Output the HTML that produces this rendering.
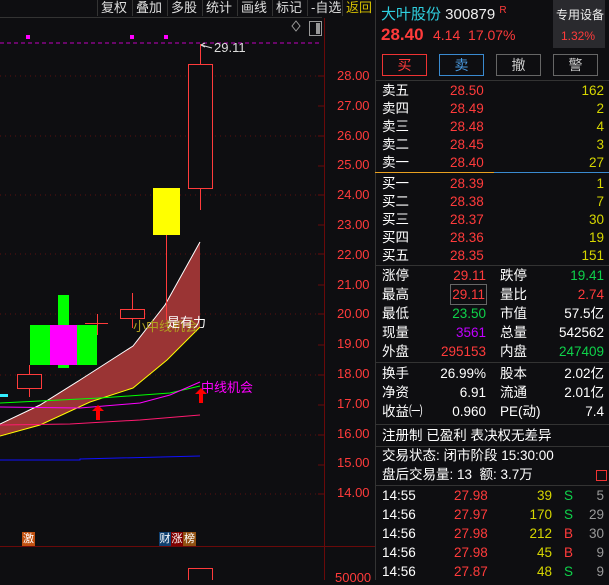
<!DOCTYPE html>
<html><head><meta charset="utf-8"><style>
*{margin:0;padding:0;box-sizing:border-box}
body{width:609px;height:580px;background:#0e0e11;overflow:hidden;position:relative;font-family:"Liberation Sans","Noto Sans CJK SC",sans-serif;color:#fff;font-size:13px}
.a{position:absolute;white-space:nowrap}
.r{color:#ff3b3b}.g{color:#0ed24a}.y{color:#d6d600}.w{color:#e8e8e8}.m{color:#c000ff}.gr{color:#999}
.tb{position:absolute;top:0;height:16px;border-left:1px solid #333;font-size:13px;line-height:15px;padding-left:3px;color:#ddd}
.row{position:absolute;left:382px;width:222px;height:19px;font-size:13.5px;line-height:19px}
.row span{position:absolute}
.btn{position:absolute;top:54px;width:45px;height:22px;border:1px solid #666;text-align:center;line-height:20px;font-size:14px}
.hl{position:absolute;left:375px;width:234px;height:1px;background:#333}
.bd{position:absolute;top:532px;height:14px;font-size:11px;line-height:14px;text-align:center;color:#fff}
</style></head><body>
<div class="a" style="left:0;top:17px;width:322px;height:1px;background:#333"></div>
<div class="tb" style="left:97px">复权</div>
<div class="tb" style="left:132px">叠加</div>
<div class="tb" style="left:167px">多股</div>
<div class="tb" style="left:202px">统计</div>
<div class="tb" style="left:237px">画线</div>
<div class="tb" style="left:272px">标记</div>
<div class="tb" style="left:307px">-自选</div>
<div class="tb" style="left:342px;color:#d6c000">返回</div>

<svg class="a" style="left:0;top:0" width="375" height="580">
<g stroke="#5a1010" stroke-dasharray="1,4">
<line x1="0" y1="76" x2="322" y2="76"/><line x1="0" y1="136" x2="322" y2="136"/><line x1="0" y1="195" x2="322" y2="195"/><line x1="0" y1="254" x2="322" y2="254"/><line x1="0" y1="314" x2="322" y2="314"/><line x1="0" y1="375" x2="322" y2="375"/><line x1="0" y1="435" x2="322" y2="435"/><line x1="0" y1="494" x2="322" y2="494"/>
</g>
<line x1="0" y1="43" x2="322" y2="43" stroke="#c000c0" stroke-dasharray="4,3"/>
<rect x="26" y="35" width="4" height="4" fill="#f0f"/><rect x="130" y="35" width="4" height="4" fill="#f0f"/><rect x="164" y="35" width="4" height="4" fill="#f0f"/>
<line x1="324.5" y1="18" x2="324.5" y2="580" stroke="#6a0a0a"/>
<line x1="0" y1="546.5" x2="375" y2="546.5" stroke="#6a0a0a"/>
<g stroke="#6a0a0a"><line x1="318" y1="76" x2="324" y2="76"/><line x1="318" y1="106" x2="324" y2="106"/><line x1="318" y1="136" x2="324" y2="136"/><line x1="318" y1="166" x2="324" y2="166"/><line x1="318" y1="195" x2="324" y2="195"/><line x1="318" y1="225" x2="324" y2="225"/><line x1="318" y1="254" x2="324" y2="254"/><line x1="318" y1="285" x2="324" y2="285"/><line x1="318" y1="314" x2="324" y2="314"/><line x1="318" y1="345" x2="324" y2="345"/><line x1="318" y1="375" x2="324" y2="375"/><line x1="318" y1="405" x2="324" y2="405"/><line x1="318" y1="435" x2="324" y2="435"/><line x1="318" y1="465" x2="324" y2="465"/><line x1="318" y1="494" x2="324" y2="494"/></g>
<path d="M296 21 L300 26 L296 31 L292 26 Z" fill="none" stroke="#999"/>
<rect x="309.5" y="21.5" width="12" height="14" fill="none" stroke="#999"/><rect x="316" y="23" width="4" height="11" fill="#999"/>
<path d="M0 424 L40 405 L80 380 L133 346 L165 305 L200 242 L200 327 L167 360 L133 388 L90 402 L40 425 L0 436 Z" fill="#9a3434"/>
<path d="M0 424 L40 405 L80 380 L133 346 L165 305 L200 242" fill="none" stroke="#fff"/>
<path d="M0 436 L40 425 L90 402 L133 388 L167 360 L200 327" fill="none" stroke="#ff0"/>
<path d="M0 403 L100 398 L170 393 L200 386" fill="none" stroke="#0f0"/>
<path d="M0 407 L80 408 L140 403 L170 395 L200 382" fill="none" stroke="#f0f"/>
<path d="M0 425 L70 424 L140 420 L200 415" fill="none" stroke="#ff1a70"/>
<path d="M0 460 L80 460 L80 459 L200 456" fill="none" stroke="#1010ff"/>
<rect x="0" y="394" width="8" height="3" fill="#3ef"/>
<line x1="29.5" y1="365" x2="29.5" y2="397" stroke="#ff3b3b"/><rect x="17.5" y="374.5" width="24" height="14" fill="#0e0e11" stroke="#ff3b3b"/>
<rect x="58" y="295" width="11" height="73" fill="#0f0"/>
<rect x="30" y="325" width="67" height="40" fill="#0f0"/><rect x="50" y="325" width="27" height="40" fill="#f0f"/>
<line x1="85" y1="323.5" x2="108" y2="323.5" stroke="#ff3b3b"/><line x1="97.5" y1="314" x2="97.5" y2="335" stroke="#ff3b3b"/>
<line x1="132.5" y1="293" x2="132.5" y2="328" stroke="#ff3b3b"/><rect x="120.5" y="309.5" width="24" height="9" fill="#0e0e11" stroke="#ff3b3b"/>
<line x1="166.5" y1="235" x2="166.5" y2="320" stroke="#ff3b3b"/><rect x="153" y="188" width="27" height="47" fill="#ff0"/>
<line x1="200.5" y1="44" x2="200.5" y2="210" stroke="#ff3b3b"/><rect x="188.5" y="64.5" width="24" height="124" fill="#0e0e11" stroke="#ff3b3b"/>
<rect x="188.5" y="568.5" width="24" height="20" fill="none" stroke="#ff3b3b"/>
<path d="M98 405 L104 411 L100 411 L100 420 L96 420 L96 411 L92 411 Z" fill="#f00"/>
<path d="M201 388 L207 394 L203 394 L203 403 L199 403 L199 394 L195 394 Z" fill="#f00"/>
<path d="M201 45 L205 43 M201 45 L205 47 M201 45 L212 48" stroke="#ddd" fill="none"/>
</svg>
<div class="a" style="left:214px;top:40px;font-size:13px;color:#ddd">29.11</div>
<div class="a" style="left:133px;top:316px;font-size:13px;color:#b0a020">小中线机会</div>
<div class="a" style="left:167px;top:312px;font-size:13px;color:#fff">是有力</div>
<div class="a" style="left:201px;top:377px;font-size:13px;color:#f0f">中线机会</div>
<div class="bd" style="left:22px;width:13px;background:#c05010">激</div>
<div class="bd" style="left:159px;width:12px;background:#104070">财</div>
<div class="bd" style="left:171px;width:12px;background:#800000">涨</div>
<div class="bd" style="left:183px;width:13px;background:#905010">榜</div>
<div class="a r" style="left:337px;top:61px;font-size:13px;line-height:29.8px">28.00<br>27.00<br>26.00<br>25.00<br>24.00<br>23.00<br>22.00<br>21.00<br>20.00<br>19.00<br>18.00<br>17.00<br>16.00<br>15.00<br>14.00</div>
<div class="a r" style="left:335px;top:570px;font-size:13px">50000</div>

<div class="a" style="left:375px;top:0;width:1px;height:580px;background:#333"></div>
<div class="a" style="left:381px;top:3px;font-size:15px;color:#2fd0e0">大叶股份 <span style="color:#eee">300879</span> <sup class="r" style="font-size:10px">R</sup></div>
<div class="a" style="left:553px;top:0;width:52px;height:48px;background:#2a2a2e"></div>
<div class="a" style="left:556px;top:6px;font-size:12px;color:#eee">专用设备</div>
<div class="a r" style="left:561px;top:29px;font-size:12px">1.32%</div>
<div class="a r" style="left:381px;top:25px;font-size:17px;font-weight:bold">28.40</div>
<div class="a r" style="left:433px;top:27px;font-size:14px">4.14&nbsp;&nbsp;17.07%</div>
<div class="btn r" style="left:382px;border-color:#e33">买</div>
<div class="btn" style="left:439px;border-color:#3a8ad0;color:#4a9ae0">卖</div>
<div class="btn" style="left:496px;color:#ccc">撤</div>
<div class="btn" style="left:553px;color:#ccc">警</div>
<div class="hl" style="top:80px"></div>
<div class="row" style="top:81px"><span>卖五</span><span class="r" style="left:68px">28.50</span><span class="y" style="right:0">162</span></div>
<div class="row" style="top:99px"><span>卖四</span><span class="r" style="left:68px">28.49</span><span class="y" style="right:0">2</span></div>
<div class="row" style="top:117px"><span>卖三</span><span class="r" style="left:68px">28.48</span><span class="y" style="right:0">4</span></div>
<div class="row" style="top:135px"><span>卖二</span><span class="r" style="left:68px">28.45</span><span class="y" style="right:0">3</span></div>
<div class="row" style="top:153px"><span>卖一</span><span class="r" style="left:68px">28.40</span><span class="y" style="right:0">27</span></div>
<div class="a" style="left:375px;top:172px;width:119px;height:1px;background:#e8a020"></div>
<div class="a" style="left:494px;top:172px;width:115px;height:1px;background:#3a8ad0"></div>
<div class="row" style="top:174px"><span>买一</span><span class="r" style="left:68px">28.39</span><span class="y" style="right:0">1</span></div>
<div class="row" style="top:192px"><span>买二</span><span class="r" style="left:68px">28.38</span><span class="y" style="right:0">7</span></div>
<div class="row" style="top:210px"><span>买三</span><span class="r" style="left:68px">28.37</span><span class="y" style="right:0">30</span></div>
<div class="row" style="top:228px"><span>买四</span><span class="r" style="left:68px">28.36</span><span class="y" style="right:0">19</span></div>
<div class="row" style="top:246px"><span>买五</span><span class="r" style="left:68px">28.35</span><span class="y" style="right:0">151</span></div>
<div class="hl" style="top:265px"></div>
<div class="row" style="top:266px"><span>涨停</span><span class="r" style="right:118px">29.11</span><span style="left:118px">跌停</span><span class="g" style="right:0">19.41</span></div>
<div class="row" style="top:285px"><span>最高</span><span class="r" style="right:118px;outline:1px solid #666;padding:0 1px">29.11</span><span style="left:118px">量比</span><span class="r" style="right:0">2.74</span></div>
<div class="row" style="top:304px"><span>最低</span><span class="g" style="right:118px">23.50</span><span style="left:118px">市值</span><span style="right:0">57.5亿</span></div>
<div class="row" style="top:323px"><span>现量</span><span class="m" style="right:118px">3561</span><span style="left:118px">总量</span><span style="right:0">542562</span></div>
<div class="row" style="top:342px"><span>外盘</span><span class="r" style="right:118px">295153</span><span style="left:118px">内盘</span><span class="g" style="right:0">247409</span></div>
<div class="hl" style="top:362px"></div>
<div class="row" style="top:364px"><span>换手</span><span style="right:118px">26.99%</span><span style="left:118px">股本</span><span style="right:0">2.02亿</span></div>
<div class="row" style="top:383px"><span>净资</span><span style="right:118px">6.91</span><span style="left:118px">流通</span><span style="right:0">2.01亿</span></div>
<div class="row" style="top:402px"><span>收益㈠</span><span style="right:118px">0.960</span><span style="left:118px">PE(动)</span><span style="right:0">7.4</span></div>
<div class="hl" style="top:424px"></div>
<div class="row" style="top:426px"><span>注册制 已盈利 表决权无差异</span></div>
<div class="hl" style="top:446px"></div>
<div class="row" style="top:446px"><span>交易状态: 闭市阶段 15:30:00</span></div>
<div class="row" style="top:465px"><span>盘后交易量: 13&nbsp; 额: 3.7万</span></div>
<div class="a" style="left:596px;top:470px;width:11px;height:11px;border:1px solid #e33"></div>
<div class="hl" style="top:485px"></div>
<div class="row" style="top:486px"><span>14:55</span><span class="r" style="left:72px">27.98</span><span class="y" style="right:52px">39</span><span class="g" style="left:182px">S</span><span class="gr" style="right:0">5</span></div>
<div class="row" style="top:505px"><span>14:56</span><span class="r" style="left:72px">27.97</span><span class="y" style="right:52px">170</span><span class="g" style="left:182px">S</span><span class="gr" style="right:0">29</span></div>
<div class="row" style="top:524px"><span>14:56</span><span class="r" style="left:72px">27.98</span><span class="y" style="right:52px">212</span><span class="r" style="left:182px">B</span><span class="gr" style="right:0">30</span></div>
<div class="row" style="top:543px"><span>14:56</span><span class="r" style="left:72px">27.98</span><span class="y" style="right:52px">45</span><span class="r" style="left:182px">B</span><span class="gr" style="right:0">9</span></div>
<div class="row" style="top:562px"><span>14:56</span><span class="r" style="left:72px">27.87</span><span class="y" style="right:52px">48</span><span class="g" style="left:182px">S</span><span class="gr" style="right:0">9</span></div>
</body></html>
